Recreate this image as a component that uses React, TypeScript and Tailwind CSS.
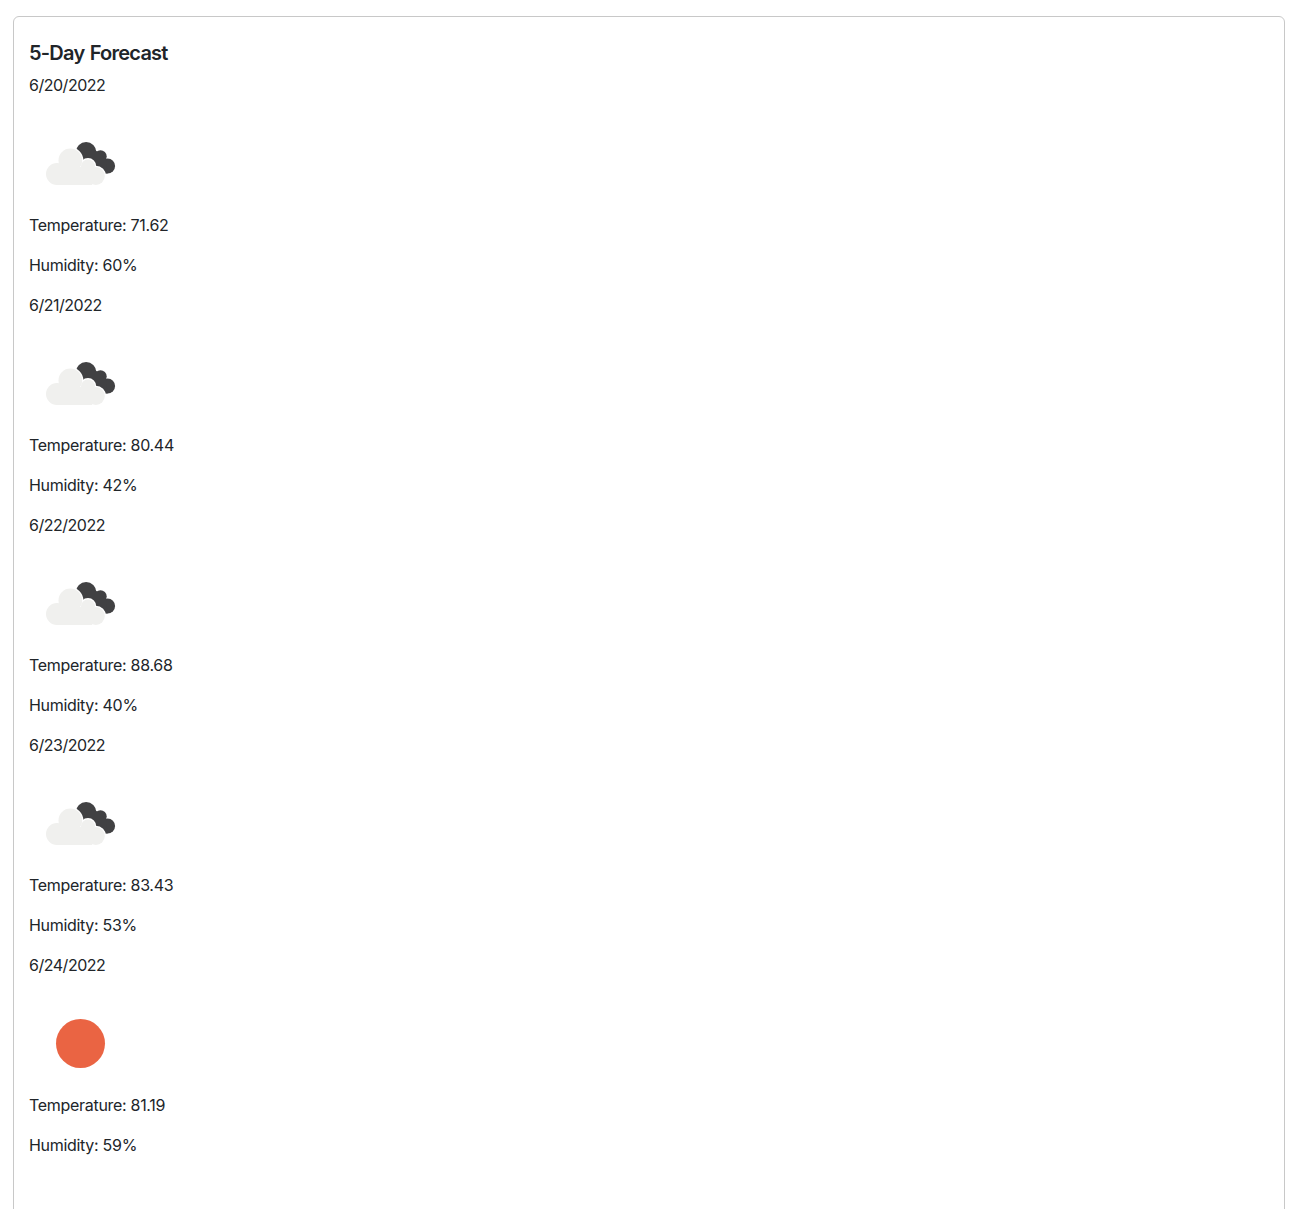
type Day = { date: string; icon: 'clouds' | 'sun'; temp: string; humidity: string };

const days: Day[] = [
  { date: '6/20/2022', icon: 'clouds', temp: '71.62', humidity: '60%' },
  { date: '6/21/2022', icon: 'clouds', temp: '80.44', humidity: '42%' },
  { date: '6/22/2022', icon: 'clouds', temp: '88.68', humidity: '40%' },
  { date: '6/23/2022', icon: 'clouds', temp: '83.43', humidity: '53%' },
  { date: '6/24/2022', icon: 'sun', temp: '81.19', humidity: '59%' },
];

function CloudShape() {
  return (
    <>
      <circle cx="27" cy="61" r="11" />
      <circle cx="40.3" cy="47.4" r="11.8" />
      <circle cx="58" cy="53.4" r="7" />
      <circle cx="65.8" cy="63" r="9" />
      <rect x="27" y="54" width="35" height="18" />
    </>
  );
}

function Clouds() {
  return (
    <svg className="block size-[100px]" viewBox="0 0 100 100" aria-hidden="true">
      <g fill="#414143">
        <circle cx="56.1" cy="39.2" r="10.2" />
        <circle cx="70.5" cy="43.5" r="6.2" />
        <circle cx="77.6" cy="53" r="7.5" />
        <path d="M50 47L64 36L76 46L77.6 60.5H64L54 50Z" />
      </g>
      <g fill="#fff" stroke="#fff" strokeWidth="2.6">
        <CloudShape />
      </g>
      <g fill="#f0f0ee">
        <CloudShape />
      </g>
    </svg>
  );
}

function Sun() {
  return (
    <svg className="block size-[100px]" viewBox="0 0 100 100" aria-hidden="true">
      <circle cx="50.5" cy="50.5" r="24.5" fill="#ea6443" />
    </svg>
  );
}

export default function App() {
  return (
    <div className="h-[1209px] overflow-hidden bg-white pt-4 pr-[17px] pl-[13px] font-['Inter',sans-serif] text-base leading-6 text-[#212529]">
      <div className="h-[1260px] rounded-md border border-[#c8c8c8] px-[15px] pt-6">
        <h5 className="mb-2 text-xl leading-6 font-semibold tracking-[-0.76px] [word-spacing:1px]">5-Day Forecast</h5>
        {days.map((d) => (
          <section key={d.date} className="tracking-[-0.3px]">
            <p className="mb-4 tracking-[-0.48px]">{d.date}</p>
            <div className="pl-px">{d.icon === 'sun' ? <Sun /> : <Clouds />}</div>
            <p className="mb-4">Temperature: {d.temp}</p>
            <p className="mb-4">Humidity: {d.humidity}</p>
          </section>
        ))}
      </div>
    </div>
  );
}
